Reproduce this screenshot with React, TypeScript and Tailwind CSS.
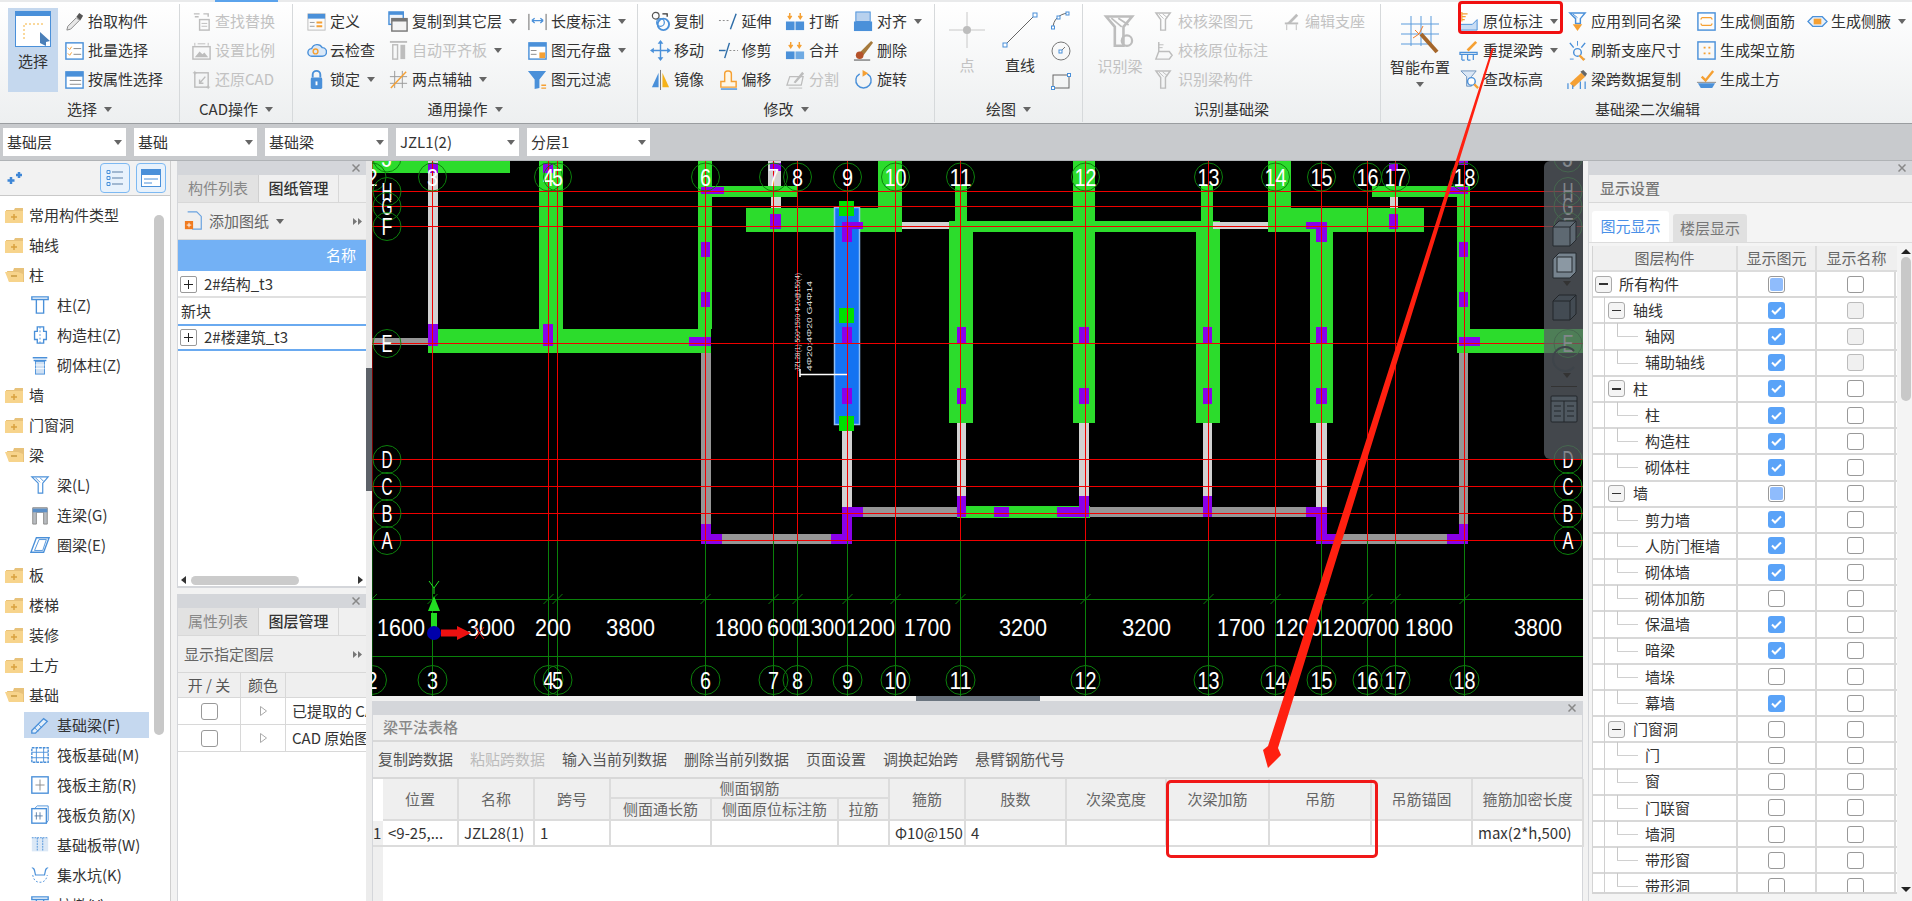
import React from "react";

const B = "#4a90d9";
const O = "#f5a033";
const G = "#bdbdbd";

type R = [number, number, number, number];

const Ico = ({ children, s = 22, className = "" }: { children: React.ReactNode; s?: number; className?: string }) => (
  <svg viewBox="0 0 22 22" width={s} height={s} fill="none" className={"shrink-0 " + className}>
    {children}
  </svg>
);

const Caret = ({ c = "#666" }: { c?: string }) => (
  <svg width="8" height="5" viewBox="0 0 8 5" className="shrink-0 ml-[7px]">
    <path d="M0 0h8L4 5z" fill={c} />
  </svg>
);

// ribbon icons
const icons: Record<string, React.ReactNode> = {
  pick: (<><path d="M3 20l1-4 9-9 3 3-9 9z" fill="#e8e8e8" stroke="#888" /><path d="M13 6l3-4 4 3-3 5z" fill="#555" /></>),
  batch: (<><rect x="2" y="3" width="18" height="17" fill="#fff" stroke={B} strokeWidth="1.5" /><path d="M4 8l2 2 2-3M4 14l2 2 2-3" stroke={O} /><path d="M10 9h8M10 15h8" stroke="#888" /></>),
  attr: (<><rect x="2" y="3" width="18" height="17" fill="#fff" stroke={B} strokeWidth="1.5" /><rect x="2" y="3" width="18" height="5" fill={B} /><path d="M6 12h12M6 16h12" stroke="#888" /></>),
  find: (<><path d="M3 3h6M4 6h4M13 3h5v3" stroke={G} strokeWidth="1.5" /><rect x="9" y="9" width="10" height="11" stroke={G} strokeWidth="1.5" /><path d="M11 13h6M11 16h6" stroke={G} /></>),
  ratio: (<><rect x="2" y="7" width="18" height="13" stroke={G} strokeWidth="1.5" /><path d="M4 18l5-6 3 3 2-2 4 5z" fill={G} /><path d="M4 3v3M18 3v3M7 4h8" stroke={G} /></>),
  restore: (<><rect x="4" y="4" width="14" height="15" stroke={G} strokeWidth="1.5" /><path d="M15 8l-6 7M9 11v4h4" stroke={G} strokeWidth="1.5" /><path d="M2 4h4M4 2v4M16 19h4M18 17v4" stroke={G} /></>),
  define: (<><rect x="2" y="3" width="18" height="17" fill="#fbfbfb" stroke="#bbb" /><rect x="2" y="3" width="18" height="5" fill={B} /><path d="M4 12h5M4 16h5" stroke="#999" /><path d="M11 12h6M11 16h6" stroke={O} strokeWidth="2" /></>),
  cloud: (<><path d="M6 17a4 4 0 010-8 6 6 0 0111-1 4.500 4.500 0 010 9z" fill="#dbe9f8" stroke={B} strokeWidth="1.5" /><circle cx="10" cy="12" r="2.500" stroke={O} strokeWidth="1.500" /></>),
  lock: (<><rect x="5" y="9" width="12" height="12" rx="1.500" fill={B} /><path d="M7 9V6a4 4 0 018 0v3" stroke={B} strokeWidth="2" /><rect x="10" y="13" width="2" height="4" fill="#fff" /></>),
  copyFloor: (<><rect x="1" y="1" width="15" height="13" fill="#eef4fb" stroke={B} strokeWidth="1.500" /><rect x="1" y="1" width="15" height="3" fill={B} /><rect x="4" y="8" width="16" height="13" fill="#f4f4f4" stroke="#777" strokeWidth="1.500" /><rect x="4" y="8" width="16" height="3" fill="#777" /></>),
  autoAlign: (<><path d="M2 2h18" stroke={G} strokeWidth="2" /><rect x="5" y="5" width="5" height="15" stroke={G} strokeWidth="1.500" /><rect x="13" y="5" width="5" height="15" fill={G} /></>),
  twoPoint: (<><path d="M7 2v18M15 2v18M2 8h18M2 15h18" stroke="#999" /><path d="M3 20L19 3" stroke={O} strokeWidth="1.500" /></>),
  len: (<><path d="M2 3v17M20 3v17" stroke="#666" /><path d="M5 10h12M5 10l3-2.500M5 10l3 2.500M17 10l-3-2.500M17 10l-3 2.500" stroke={B} strokeWidth="1.300" /></>),
  save: (<><rect x="2" y="3" width="18" height="17" fill="#fff" stroke={B} strokeWidth="1.500" /><rect x="2" y="3" width="18" height="4" fill={B} /><path d="M4 11h6M4 15h6" stroke="#888" /><rect x="13" y="13" width="6" height="6" fill={O} /></>),
  filter: (<><path d="M1 2h19l-7 9v9l-5 1V11z" fill={B} /><path d="M15 17h5M15 20h5" stroke={O} strokeWidth="1.500" /></>),
  copy: (<><circle cx="6" cy="5" r="3.500" stroke="#555" strokeWidth="1.300" /><circle cx="14" cy="14" r="6" stroke={B} strokeWidth="2" /><circle cx="11" cy="12" r="4" stroke={B} strokeWidth="1.300" /><path d="M13 3h5v3" stroke="#333" strokeWidth="1.300" /></>),
  move: (<><path d="M11 3v16M3 11h16" stroke={B} strokeWidth="1.500" /><path d="M11 0l3 4H8zM11 22l3-4H8zM0 11l4-3v6zM22 11l-4-3v6z" fill={B} /></>),
  mirror: (<><path d="M9 4v15H2z" fill={B} /><path d="M13 4v15h7z" fill="#f5b21a" /><path d="M11 1v21" stroke="#777" /></>),
  extend: (<><path d="M1 10h12" stroke="#888" strokeDasharray="2 2" /><path d="M13 19L19 3" stroke="#2e6da8" strokeWidth="1.500" /></>),
  trim: (<><path d="M1 11h7" stroke="#2e6da8" strokeWidth="1.500" /><path d="M7 19L12 3" stroke="#2e6da8" strokeWidth="1.500" /><path d="M12 11h9" stroke="#888" strokeDasharray="2 2" /></>),
  offset: (<><path d="M3 19v-6h4V5a3 3 0 013-3h1a3 3 0 013 3v8h5v6z" fill="#fff7e6" stroke={O} strokeWidth="1.500" /><path d="M3 21h17" stroke={B} strokeWidth="1.500" /></>),
  brk: (<><rect x="1" y="11" width="9" height="9" fill={B} /><rect x="11" y="11" width="9" height="9" fill={B} /><path d="M5 2v5M3 5l2 3 2-3M16 2v5M14 5l2 3 2-3" stroke={O} strokeWidth="1.500" /></>),
  merge: (<><rect x="1" y="12" width="9" height="8" fill={B} /><rect x="11" y="12" width="9" height="8" fill="#6faae3" /><path d="M6 2v5M4 5l2 3 2-3M15 2v5M13 5l2 3 2-3" stroke={O} strokeWidth="1.500" /></>),
  split: (<><path d="M2 17l3-9h14l-2 9z" stroke={G} strokeWidth="1.300" /><path d="M9 14l9-11 2 2-9 10z" fill={G} /><path d="M4 20h14" stroke={G} /></>),
  align: (<><rect x="3" y="1" width="15" height="10" fill="#b8d1ee" stroke={B} /><rect x="1" y="11" width="19" height="10" fill={B} /></>),
  del: (<><path d="M7 13L19 1l2 2L11 16z" fill="#a67a3c" /><circle cx="7" cy="16" r="4" fill="#b5522a" /><path d="M1 21h17" stroke="#444" /></>),
  rotate: (<><path d="M7 5a8 8 0 108 0" stroke={B} strokeWidth="1.500" /><path d="M10 1v7l6-3.500z" fill={O} /></>),
  ident: (<><path d="M3 2h15L13 8v11H8V8z" stroke={G} strokeWidth="1.500" /><path d="M6 3l6 5M10 3l6 4" stroke={G} /><circle cx="15" cy="16" r="3" stroke={G} strokeWidth="1.300" /></>),
  check: (<><path d="M2 2h15l-5 7v11H7V9z" stroke={G} strokeWidth="1.500" /><path d="M5 3l5 5M9 3l5 4" stroke={G} /></>),
  checkPos: (<><path d="M5 2v10" stroke={G} strokeWidth="1.500" /><path d="M5 5h5M5 8h4" stroke={G} /><path d="M2 20l3-8h11l3 4-3 4z" stroke={G} strokeWidth="1.500" /></>),
  editSup: (<><path d="M4 13h14" stroke={G} strokeWidth="2" /><path d="M6 13l10-10 2 2-8 8z" fill={G} /><path d="M6 14v6M16 14v6" stroke={G} /></>),
  yuan: (<><path d="M3 1v10M3 3h6M3 6h4M3 9h3" stroke={O} strokeWidth="1.300" /><path d="M1 14h13l5-5v11H1z" fill="#c8dcf3" stroke={B} /></>),
  tiqu: (<><path d="M8 10l9-9 2 2-9 9z" fill={O} /><path d="M1 13h18v2H1zM3 15v6M9 15v6M15 15v6M3 21h3M9 21h3" stroke={B} strokeWidth="1.300" /></>),
  chagai: (<><path d="M2 2h16l-5 6v10H8V8z" fill="#dbe7f5" stroke="#6c92bd" /><circle cx="13" cy="13" r="4" fill="#fff" stroke={B} strokeWidth="1.500" /><path d="M16 16l4 4" stroke={O} strokeWidth="2.500" /></>),
  apply: (<><path d="M3 2h16l-5 6v5H9V8z" stroke={B} strokeWidth="1.500" /><path d="M6 3l5 4" stroke={B} /><path d="M6 14h10l-5 7z" fill={O} /></>),
  fresh: (<><path d="M3 3l4 5M19 3l-4 5" stroke={B} strokeWidth="1.500" /><path d="M11 1v5M3 20h4M16 20h3" stroke={B} /><circle cx="11" cy="13" r="4" stroke={B} strokeWidth="1.500" /><path d="M13 16l5 5" stroke={O} strokeWidth="2.500" /></>),
  dataCopy: (<><path d="M3 15L15 4l4 4-12 11z" fill={O} /><path d="M14 3l3-2 4 4-2 3z" fill="#666" /><path d="M1 15v6M6 17v4M14 13v8M19 13v8" stroke={B} strokeWidth="1.300" /></>),
  sideBar: (<><rect x="2" y="2" width="18" height="18" stroke={B} strokeWidth="1.500" /><path d="M6 7h10M6 15h10M5 9l1-2M17 9l-1-2M5 13l1 2M17 13l-1 2" stroke={O} strokeWidth="1.300" /></>),
  frame: (<><rect x="2" y="2" width="18" height="18" stroke={B} strokeWidth="1.500" /><path d="M8 7h2v2H8zM13 7h2v2h-2zM8 13h2v2H8zM13 13h2v2h-2z" fill={O} /></>),
  earth: (<><path d="M6 8l4 4 8-10" stroke={O} strokeWidth="2.500" /><path d="M2 15h18l-3 5H5z" fill={B} /><path d="M1 14h20" stroke="#888" /></>),
  haunch: (<><path d="M1 11l5-5h10l5 5-5 5H6z" stroke={B} strokeWidth="1.300" fill="#e7f1fb" /><rect x="7" y="8" width="8" height="6" fill={O} /></>),
};

const Tool = ({ i, t, arrow, off, w }: { i: string; t: string; arrow?: boolean; off?: boolean; w?: string }) => (
  <div className={"flex items-center h-[29px] whitespace-nowrap " + (off ? "text-[#c2c2c2] " : "text-[#333] ") + (w || "")}>
    <span className="w-[24px] flex">
      <Ico s={21}>{icons[i]}</Ico>
    </span>
    <span>{t}</span>
    {arrow && <Caret />}
  </div>
);

const Group = ({ w, label, arrow = true, last, children, lx = "justify-center" }: { w: string; label: string; arrow?: boolean; last?: boolean; children: React.ReactNode; lx?: string }) => (
  <div className={"flex flex-col h-[118px] mt-[2px] shrink-0 " + w + (last ? "" : " border-r border-[#d6d9db]")}>
    <div className="flex h-[92px] pt-[3px]">{children}</div>
    <div className={"flex items-center h-[26px] text-[#333] " + lx}>
      {label}
      {arrow && <Caret />}
    </div>
  </div>
);

const Ribbon = () => (
  <div className="relative flex h-[124px] shrink-0 bg-linear-to-b from-white to-[#edeff0] border-t-2 border-[#e9eaeb] border-b border-b-[#9a9da0]">
    <div className="absolute left-[215px] -top-[2px] w-[63px] h-[2px] bg-[#5ba3ec]" />
    <Group w="w-[180px]" label="选择">
      <div className="ml-[8px] mr-[6px] w-[50px] h-[84px] mt-[1px] bg-[#c5d8ee] flex flex-col items-center">
        <svg width="36" height="36" viewBox="0 0 36 36" className="mt-[3px]">
          <rect x="0.500" y="0.500" width="35" height="35" fill="#fff" stroke="#4a90d9" />
          <rect x="0" y="0" width="36" height="5" fill="#4a90d9" />
          <path d="M9 28V13h20" stroke="#f5b23a" strokeDasharray="2 2" fill="none" />
          <path d="M25 21l10 9-4 1v4l-6-3z" fill="#4a7fb8" />
        </svg>
        <span className="mt-[3px] text-[#333]">选择</span>
      </div>
      <div>
        <Tool i="pick" t="抬取构件" />
        <Tool i="batch" t="批量选择" />
        <Tool i="attr" t="按属性选择" />
      </div>
    </Group>
    <Group w="w-[113px]" label="CAD操作">
      <div className="pl-[11px]">
        <Tool off i="find" t="查找替换" />
        <Tool off i="ratio" t="设置比例" />
        <Tool off i="restore" t="还原CAD" />
      </div>
    </Group>
    <Group w="w-[345px]" label="通用操作">
      <div className="pl-[13px] w-[95px]">
        <Tool i="define" t="定义" />
        <Tool i="cloud" t="云检查" />
        <Tool i="lock" t="锁定" arrow />
      </div>
      <div className="w-[139px]">
        <Tool i="copyFloor" t="复制到其它层" arrow />
        <Tool off i="autoAlign" t="自动平齐板" arrow />
        <Tool i="twoPoint" t="两点辅轴" arrow />
      </div>
      <div>
        <Tool i="len" t="长度标注" arrow />
        <Tool i="save" t="图元存盘" arrow />
        <Tool i="filter" t="图元过滤" />
      </div>
    </Group>
    <Group w="w-[297px]" label="修改">
      <div className="pl-[12px] w-[79.500px]">
        <Tool i="copy" t="复制" />
        <Tool i="move" t="移动" />
        <Tool i="mirror" t="镜像" />
      </div>
      <div className="w-[67.500px]">
        <Tool i="extend" t="延伸" />
        <Tool i="trim" t="修剪" />
        <Tool i="offset" t="偏移" />
      </div>
      <div className="w-[68px]">
        <Tool i="brk" t="打断" />
        <Tool i="merge" t="合并" />
        <Tool off i="split" t="分割" />
      </div>
      <div>
        <Tool i="align" t="对齐" arrow />
        <Tool i="del" t="删除" />
        <Tool i="rotate" t="旋转" />
      </div>
    </Group>
    <Group w="w-[148px]" label="绘图">
      <div className="ml-[14px] w-[36px] flex flex-col items-center text-[#c2c2c2]">
        <svg width="36" height="36" viewBox="0 0 36 36" className="mt-[5px]">
          <path d="M18 0v36M0 18h36" stroke="#c8c8c8" />
          <circle cx="18" cy="18" r="4" fill="#bdbdbd" />
        </svg>
        <span className="mt-[6px] whitespace-nowrap">点</span>
      </div>
      <div className="ml-[17px] w-[36px] flex flex-col items-center text-[#333]">
        <svg width="36" height="36" viewBox="0 0 36 36" className="mt-[5px]">
          <path d="M3 33L33 3" stroke="#666" />
          <rect x="1" y="31" width="4" height="4" fill="#fff" stroke="#4a90d9" />
          <rect x="31" y="1" width="4" height="4" fill="#fff" stroke="#4a90d9" />
        </svg>
        <span className="mt-[6px] whitespace-nowrap">直线</span>
      </div>
      <div className="ml-[12px] flex flex-col pt-[3px]">
        <Ico><path d="M3 18C3 10 9 4 18 3" stroke="#666" /><rect x="1.500" y="16" width="3" height="3" fill="#fff" stroke={B} /><rect x="16" y="2" width="3" height="3" fill="#fff" stroke={B} /><rect x="7" y="6" width="3" height="3" fill="#fff" stroke={B} /></Ico>
        <Ico className="mt-[8px]"><circle cx="11" cy="11" r="9" stroke="#777" /><path d="M10 12l5-5" stroke="#777" /><rect x="9" y="10" width="3" height="3" fill="#fff" stroke={B} /></Ico>
        <Ico className="mt-[8px]"><rect x="3" y="5" width="16" height="13" stroke="#666" /><rect x="1.500" y="16.500" width="3" height="3" fill="#fff" stroke={B} /><rect x="17.500" y="3.500" width="3" height="3" fill="#fff" stroke={B} /></Ico>
      </div>
    </Group>
    <Group w="w-[298px]" label="识别基础梁" arrow={false} lx="justify-center mt-[2px]">
      <div className="ml-[14px] w-[46px] flex flex-col items-center text-[#c2c2c2]">
        <Ico s={38} className="mt-[6px]">{icons.ident}</Ico>
        <span className="mt-[4px] whitespace-nowrap">识别梁</span>
      </div>
      <div className="ml-[11px] w-[127px]">
        <Tool off i="check" t="校核梁图元" />
        <Tool off i="checkPos" t="校核原位标注" />
        <Tool off i="check" t="识别梁构件" />
      </div>
      <div>
        <Tool off i="editSup" t="编辑支座" />
      </div>
    </Group>
    <Group w="w-[531px]" label="基础梁二次编辑" arrow={false} last lx="justify-start pl-[214px] mt-[2px]">
      <div className="ml-[9px] w-[60px] mr-[9px] flex flex-col items-center text-[#333] whitespace-nowrap">
        <svg width="38" height="38" viewBox="0 0 38 38" className="mt-[9px]">
          <path d="M10 0v30M20 0v30M30 0v30M0 8h38M0 18h38M0 28h30" stroke="#5b9bdc" />
          <path d="M36 36L20 18" stroke="#a5662a" strokeWidth="4" />
          <path d="M14 14l4 4M22 10l-4 8M12 22l6-4" stroke="#f27d2a" />
        </svg>
        <span className="mt-[2px]">智能布置</span>
        <span className="mt-[3px] -ml-[7px]"><Caret /></span>
      </div>
      <div className="w-[108px]">
        <Tool i="yuan" t="原位标注" arrow />
        <Tool i="tiqu" t="重提梁跨" arrow />
        <Tool i="chagai" t="查改标高" />
      </div>
      <div className="w-[129px]">
        <Tool i="apply" t="应用到同名梁" />
        <Tool i="fresh" t="刷新支座尺寸" />
        <Tool i="dataCopy" t="梁跨数据复制" />
      </div>
      <div className="w-[111px]">
        <Tool i="sideBar" t="生成侧面筋" />
        <Tool i="frame" t="生成架立筋" />
        <Tool i="earth" t="生成土方" />
      </div>
      <div>
        <Tool i="haunch" t="生成侧腋" arrow />
      </div>
    </Group>
  </div>
);

const Sel = ({ t }: { t: string }) => (
  <div className="w-[123px] h-[28px] bg-white flex items-center justify-between px-[4px] text-[#333]">
    <span>{t}</span>
    <Caret />
  </div>
);

const Bar = () => (
  <div className="flex items-center gap-[8px] h-[36px] shrink-0 bg-[#c8cacd] pl-[3px]">
    {["基础层", "基础", "基础梁", "JZL1(2)", "分层1"].map((t) => (
      <Sel key={t} t={t} />
    ))}
  </div>
);

// tree on the left
const tree: [string, number, string?][] = [
  ["常用构件类型", 0], ["轴线", 0], ["柱", 1], ["柱(Z)", 2, "col"], ["构造柱(Z)", 2, "gz"], ["砌体柱(Z)", 2, "qt"],
  ["墙", 0], ["门窗洞", 0], ["梁", 1], ["梁(L)", 2, "beam"], ["连梁(G)", 2, "lian"], ["圈梁(E)", 2, "quan"],
  ["板", 0], ["楼梯", 0], ["装修", 0], ["土方", 0], ["基础", 1], ["基础梁(F)", 2, "jcl"], ["筏板基础(M)", 2, "fb"],
  ["筏板主筋(R)", 2, "fz"], ["筏板负筋(X)", 2, "ff"], ["基础板带(W)", 2, "bd"], ["集水坑(K)", 2, "js"], ["柱墩(Y)", 2, "col"],
];

const leaf: Record<string, React.ReactNode> = {
  col: (<><path d="M2 2h18v3H2zM7 5h8v15H7z" stroke={B} strokeWidth="1.500" /></>),
  gz: (<><path d="M8 2h7v5h3v9h-3v4H8v-4H5V7h3z" stroke={B} strokeWidth="1.500" /><path d="M11 2v18" stroke={B} strokeDasharray="2 2" /></>),
  qt: (<><path d="M3 3h16M4 6h14" stroke={B} strokeWidth="1.500" /><rect x="6" y="7" width="10" height="14" fill="#cfe0f3" stroke={B} /><path d="M6 11h10M6 15h10" stroke="#fff" /></>),
  beam: (<><path d="M2 2h18l-6 7v11H9V9z" stroke={B} strokeWidth="1.300" /><path d="M6 3l5 5M11 3l4 4" stroke={B} /></>),
  lian: (<><path d="M3 21V3h16v18h-4V8H7v13z" fill="#b8bcc0" stroke="#888" /><rect x="3" y="4" width="16" height="4" fill="#5b8fc7" /></>),
  quan: (<><path d="M7 3h14l-6 16H1z" stroke={B} strokeWidth="1.500" /><path d="M10 5h8l-4 12H5z" stroke={B} /></>),
  jcl: (<><path d="M2 17L15 4l4 3L6 20H2z" fill="#e2eefa" stroke={B} strokeWidth="1.500" /><path d="M5 14l4 4M9 10l4 4" stroke={B} /></>),
  fb: (<><rect x="2" y="3" width="18" height="16" stroke={B} strokeWidth="1.500" strokeDasharray="3 1" /><path d="M2 8h18M2 14h18M7 3v16M15 3v16" stroke={B} /></>),
  fz: (<><rect x="2" y="2" width="18" height="18" stroke={B} strokeWidth="1.500" /><path d="M11 5v12M6 11h10" stroke="#888" /></>),
  ff: (<><rect x="2" y="4" width="16" height="16" stroke={B} strokeWidth="1.500" /><path d="M5 4l3-3h12v16l-2 3" stroke={B} /><path d="M7 8v8M11 8v8M5 12h9" stroke="#5a7ea6" /></>),
  bd: (<><rect x="2" y="3" width="18" height="15" fill="#dbe8f6" /><path d="M2 3h18M8 3v15M14 3v15" stroke={B} strokeDasharray="2 1" /></>),
  js: (<><path d="M2 3c3 0 3 3 4 8h10c1-5 1-8 4-8" stroke={B} strokeWidth="1.300" /><path d="M3 11c1 6 4 8 8 8s7-2 8-8" stroke={B} strokeDasharray="2 2" /></>),
};

const Folder = ({ open }: { open?: boolean }) =>
  open ? (
    <svg width="20" height="16" viewBox="0 0 20 16" className="shrink-0">
      <path d="M2 4h6l1-3h10v14H4z" fill="#e8c27a" />
      <path d="M0 5h13l5 2v8H4z" fill="#f7d48c" />
      <path d="M6 9h6" stroke="#c89a3f" strokeWidth="1.500" />
    </svg>
  ) : (
    <svg width="18" height="16" viewBox="0 0 18 16" className="shrink-0">
      <path d="M1 3h8l1-2h8v14H1z" fill="#e8c27a" />
      <rect x="0" y="4" width="18" height="12" fill="#f7d48c" />
      <path d="M6 10h6M9 7v6" stroke="#d9a13f" strokeWidth="1.500" />
    </svg>
  );

const LeftTree = () => (
  <div className="w-[171px] shrink-0 flex flex-col bg-white border-r border-[#cfcfcf] overflow-hidden">
    <div className="h-[35px] shrink-0 bg-[#f2f2f2] border-b border-[#c9c9c9] flex items-center">
      <svg width="16" height="14" viewBox="0 0 16 14" className="ml-[7px]">
        <path d="M4 6v7M0.500 9.500h7M12 1v6M9 4h6" stroke="#3e86d6" strokeWidth="2.500" />
      </svg>
      <div className="ml-[77px] w-[30px] h-[30px] rounded-[4px] border border-[#7db9f2] bg-[#e8f2fc] flex items-center justify-center">
        <svg width="18" height="18" viewBox="0 0 18 18">
          <path d="M6 3h11M6 9h11M6 15h11" stroke="#5a7ea6" />
          <path d="M1 1.500h3v3H1zM1 7.500h3v3H1zM1 13.500h3v3H1z" stroke="#4a90d9" fill="none" />
        </svg>
      </div>
      <div className="ml-[6px] w-[30px] h-[30px] rounded-[4px] border border-[#7db9f2] bg-[#e8f2fc] flex items-center justify-center">
        <svg width="20" height="18" viewBox="0 0 20 18">
          <rect x="0.500" y="0.500" width="19" height="17" fill="#fff" stroke="#4a90d9" />
          <rect x="0" y="0" width="20" height="6" fill="#4a90d9" />
          <path d="M3 10h14M3 14h8" stroke="#4a90d9" />
        </svg>
      </div>
    </div>
    <div className="relative flex-1 pt-[4px]">
      {tree.map(([t, k, ic], i) => (
        <div key={i} className={"flex items-center h-[30px] text-[#333] whitespace-nowrap " + (k === 2 ? "pl-[30px]" : "pl-[5px]")}>
          {k === 2 ? (
            <div className={"flex items-center h-[26px] -ml-[6px] pl-[6px] w-[125px] " + (t === "基础梁(F)" ? "bg-[#c5d8ef]" : "")}>
              <Ico s={20}>{leaf[ic!]}</Ico>
              <span className="ml-[7px]">{t}</span>
            </div>
          ) : (
            <>
              <span className="w-[24px] flex">
                <Folder open={k === 1} />
              </span>
              <span>{t}</span>
            </>
          )}
        </div>
      ))}
      <div className="absolute left-[154px] top-[19px] w-[10px] h-[520px] rounded-full bg-[#c8c8c8]" />
    </div>
  </div>
);

const Close = () => (
  <div className="h-[14px] shrink-0 bg-[#d4d6da] flex items-center justify-end pr-[6px]">
    <svg width="8" height="8" viewBox="0 0 8 8">
      <path d="M0.500 0.500l7 7M7.500 0.500l-7 7" stroke="#888" strokeWidth="1.500" />
    </svg>
  </div>
);

const Forward = () => (
  <svg width="9" height="7" viewBox="0 0 9 7" className="shrink-0">
    <path d="M0 0l4 3.500L0 7zM5 0l4 3.500L5 7z" fill="#777" />
  </svg>
);

const Tabs = ({ a, b }: { a: string; b: string }) => (
  <div className="flex h-[28px] shrink-0 bg-[#f0f0f0] border-b border-[#d8d8d8]">
    <div className="w-[81px] bg-[#e2e2e2] text-[#888] flex items-center justify-center border-r border-[#d0d0d0]">{a}</div>
    <div className="w-[80px] text-[#333] font-medium flex items-center justify-center border-r border-[#d8d8d8]">{b}</div>
  </div>
);

const Plus = () => (
  <span className="w-[17px] h-[17px] border border-[#9a9a9a] rounded-[2px] flex items-center justify-center ml-[2px] shrink-0 bg-white">
    <svg width="9" height="9" viewBox="0 0 9 9">
      <path d="M4.500 0v9M0 4.500h9" stroke="#222" />
    </svg>
  </span>
);

const Middle = () => (
  <div className="w-[189px] shrink-0 ml-[6px] flex flex-col text-[#333] gap-[6px]">
    <div className="h-[427px] flex flex-col border-b-2 border-l border-[#d4d6da] bg-white">
      <Close />
      <Tabs a="构件列表" b="图纸管理" />
      <div className="h-[37px] shrink-0 bg-[#efefef] border-b border-[#d8d8d8] flex items-center pl-[6px] pr-[4px] text-[#666]">
        <Ico s={20}><path d="M4 1h10l5 5v14H9" stroke="#6aa3e0" strokeWidth="1.300" /><rect x="1" y="11" width="9" height="9" fill="#f07a1f" /><path d="M5.500 13v5M3 15.500h5" stroke="#fff" /></Ico>
        <span className="ml-[5px]">添加图纸</span>
        <Caret />
        <span className="ml-auto"><Forward /></span>
      </div>
      <div className="h-[31px] shrink-0 bg-[#73b1f5] text-white flex items-center justify-end pr-[10px]">名称</div>
      <div className="h-[26px] mt-[1px] flex items-center border-b-2 border-[#e0e0e0]">
        <Plus />
        <span className="ml-[7px]">2#结构_t3</span>
      </div>
      <div className="h-[26px] flex items-center pl-[3px]">新块</div>
      <div className="h-[27px] flex items-center border-y-2 border-[#6aaaf0]">
        <Plus />
        <span className="ml-[7px]">2#楼建筑_t3</span>
      </div>
      <div className="flex-1" />
      <div className="h-[12px] flex items-center px-[3px] shrink-0">
        <svg width="5" height="8" viewBox="0 0 5 8"><path d="M5 0v8L0 4z" fill="#333" /></svg>
        <div className="ml-[5px] w-[108px] h-[9px] rounded-full bg-[#cbcbcb]" />
        <svg width="5" height="8" viewBox="0 0 5 8" className="ml-auto"><path d="M0 0v8l5-4z" fill="#333" /></svg>
      </div>
    </div>
    <div className="flex-1 flex flex-col border-l border-[#d4d6da] bg-white overflow-hidden">
      <Close />
      <Tabs a="属性列表" b="图层管理" />
      <div className="h-[37px] shrink-0 bg-[#efefef] border-b border-[#d8d8d8] flex items-center pl-[6px] pr-[4px] text-[#666] justify-between">
        显示指定图层
        <Forward />
      </div>
      <div className="grid grid-cols-[63px_45px_81px] whitespace-nowrap">
        <div className="h-[25px] bg-[#efefef] border-r border-b border-[#d8d8d8] flex items-center justify-center text-[#555]">开 / 关</div>
        <div className="h-[25px] bg-[#efefef] border-r border-b border-[#d8d8d8] flex items-center justify-center text-[#555]">颜色</div>
        <div className="h-[25px] bg-[#efefef] border-b border-[#d8d8d8]" />
        {["已提取的 CAD 图层", "CAD 原始图层"].map((t) => (
          <React.Fragment key={t}>
            <div className="h-[27px] border-r border-b border-[#d8d8d8] flex items-center justify-center">
              <span className="w-[17px] h-[17px] rounded-[3px] border border-[#999]" />
            </div>
            <div className="h-[27px] border-r border-b border-[#d8d8d8] flex items-center justify-center">
              <svg width="7" height="10" viewBox="0 0 7 10"><path d="M0.500 0.500v9l6-4.500z" fill="#fff" stroke="#aaa" /></svg>
            </div>
            <div className="h-[27px] border-b border-[#d8d8d8] flex items-center pl-[6px] overflow-hidden">{t}</div>
          </React.Fragment>
        ))}
      </div>
    </div>
  </div>
);

// CAD drawing, coordinates are page pixels
const GREEN: R[] = [
  [372, 160, 510, 172], [539, 160, 563, 328], [428, 328, 711, 352], [698, 160, 712, 328], [701, 185, 797, 196],
  [746, 207, 902, 231], [878, 160, 902, 207], [955, 184, 967, 220], [949, 220, 1220, 231], [949, 231, 973, 422],
  [1073, 160, 1095, 422], [1201, 184, 1213, 220], [1196, 231, 1220, 422], [1268, 160, 1291, 207], [1268, 207, 1424, 231],
  [1310, 231, 1333, 422], [1372, 185, 1470, 196], [1457, 196, 1470, 328], [1457, 328, 1583, 352], [957, 505, 1090, 517],
];
const LIGHT: R[] = [
  [428, 160, 438, 323], [768, 160, 781, 185], [771, 196, 781, 207], [842, 430, 852, 507], [902, 221, 949, 228],
  [1213, 221, 1268, 228], [957, 422, 966, 495], [1079, 422, 1089, 495], [1203, 422, 1212, 495], [1316, 422, 1327, 506],
  [1390, 196, 1398, 207],
];
const DARK: R[] = [
  [372, 337, 428, 344], [701, 352, 711, 523], [722, 533, 831, 543], [863, 506, 957, 516], [1090, 506, 1306, 516],
  [1340, 533, 1447, 543], [1459, 352, 1468, 523],
];
const PURPLE: R[] = [
  [428, 162, 438, 172], [428, 323, 438, 345], [543, 162, 553, 172], [543, 323, 553, 345], [701, 186, 724, 193],
  [689, 336, 711, 345], [701, 241, 710, 256], [701, 291, 710, 306], [701, 523, 711, 543], [701, 533, 722, 543],
  [831, 533, 852, 543], [842, 507, 852, 543], [842, 506, 863, 516], [770, 162, 781, 170], [770, 213, 781, 228],
  [957, 326, 966, 342], [957, 387, 966, 403], [1079, 326, 1089, 342], [1079, 387, 1089, 403], [1203, 326, 1212, 342],
  [1203, 387, 1212, 403], [1316, 326, 1327, 342], [1316, 387, 1327, 403], [957, 495, 966, 516], [1079, 495, 1089, 516],
  [1057, 506, 1089, 516], [994, 506, 1009, 516], [1203, 495, 1212, 516], [1306, 221, 1327, 228], [1316, 221, 1327, 241],
  [1306, 506, 1327, 516], [1316, 506, 1327, 543], [1316, 533, 1340, 543], [1447, 533, 1468, 543], [1459, 523, 1468, 543],
  [1447, 186, 1468, 193], [1459, 241, 1468, 256], [1459, 291, 1468, 306], [1459, 160, 1468, 164], [1459, 336, 1480, 345],
  [1389, 162, 1398, 170], [1389, 213, 1398, 228],
];
const BEAM_PURPLE: R[] = [[842, 221, 852, 241], [842, 221, 863, 228], [842, 326, 852, 342], [842, 387, 852, 403]];
const NODES: R[] = [[839, 200, 854, 215], [839, 307, 854, 322], [839, 415, 854, 430]];

const COLS: [string, number][] = [
  ["2", 372], ["3", 432.5], ["4", 548.5], ["5", 557.5], ["6", 705.5], ["7", 773.5], ["8", 797.5], ["9", 847.5], ["10", 895.5], ["11", 960.5],
  ["12", 1085.5], ["13", 1208.5], ["14", 1275.5], ["15", 1321.5], ["16", 1367.5], ["17", 1395.5], ["18", 1464.5],
];
const ROWS: [string, number][] = [["H", 190.5], ["G", 205.5], ["F", 225.5], ["E", 342.5], ["D", 458.5], ["C", 485.5], ["B", 512.5], ["A", 539.5]];
const DIMS: [string, number, number][] = [
  ["1600", 377, 48], ["3000", 467, 48], ["200", 535, 36], ["3800", 606, 49], ["1800", 715, 48], ["600", 767, 36], ["1300", 799, 47],
  ["1200", 846, 49], ["1700", 904, 47], ["3200", 999, 48], ["3200", 1122, 49], ["1700", 1217, 48], ["1200", 1275, 47], ["1200", 1321, 48],
  ["700", 1365, 34], ["1800", 1405, 48], ["3800", 1514, 48],
];

const Rects = ({ d, c }: { d: R[]; c: string }) => (
  <>
    {d.map(([x1, y1, x2, y2], i) => (
      <rect key={i} x={x1} y={y1} width={x2 - x1} height={y2 - y1} fill={c} />
    ))}
  </>
);

const Axis = ({ t, x, y, r = 14 }: { t: string; x: number; y: number; r?: number }) => (
  <g>
    <circle cx={x} cy={y} r={r} stroke="#0c800c" fill="none" />
    <text x={x} y={y + 8.500} fill="#fff" fontSize="24" textAnchor="middle" textLength={t.length * 11} lengthAdjust="spacingAndGlyphs" fontFamily="Liberation Sans">
      {t}
    </text>
  </g>
);

const Canvas = () => (
  <div className="relative h-[535px] shrink-0 bg-black overflow-hidden">
    <svg viewBox="372 160 1211 535" width="1211" height="535" className="block">
      <Rects d={GREEN} c="#2cdc2c" />
      <Rects d={LIGHT} c="#d2d2d2" />
      <Rects d={DARK} c="#969696" />
      <Rects d={PURPLE} c="#8a00ea" />
      <rect x="834.500" y="206.500" width="25" height="217" fill="#1473f2" stroke="#8fbdf2" strokeWidth="1.500" />
      <Rects d={BEAM_PURPLE} c="#8a00ea" />
      <Rects d={NODES} c="#00e000" />
      {COLS.map(([t, x]) => (
        <g key={t}>
          <path d={`M${x} 160V539`} stroke="#f00000" />
          <path d={`M${x} 539V695`} stroke="#0a800a" />
          <path d={`M${x - 5} 603l10-10`} stroke="#0a800a" />
        </g>
      ))}
      {ROWS.map(([t, y]) => (
        <path key={t} d={`M372 ${y}H1583`} stroke="#f00000" />
      ))}
      <path d="M372 598.500H1583M372 655.500H1583" stroke="#0a800a" />
      {COLS.map(([t, x]) => (
        <React.Fragment key={t}>
          <Axis t={t} x={x} y={176} />
          <Axis t={t} x={x} y={679} r={14.500} />
        </React.Fragment>
      ))}
      {ROWS.map(([t, y]) => (
        <React.Fragment key={t}>
          <Axis t={t} x={387} y={y} />
          <Axis t={t} x={1568} y={y} />
        </React.Fragment>
      ))}
      <Axis t="J" x={387} y={157} />
      <Axis t="J" x={1568} y={157} />
      {DIMS.map(([t, x, w], i) => (
        <text key={i} x={x} y={635} fill="#fff" fontSize="24" textLength={w} lengthAdjust="spacingAndGlyphs" fontFamily="Liberation Sans">
          {t}
        </text>
      ))}
      <path d="M800 373.500H847M800 368v8" stroke="#fff" strokeWidth="1.500" />
      <text transform="translate(800 370) rotate(-90)" fill="#ddd" fontSize="7" textLength="98" lengthAdjust="spacingAndGlyphs" fontFamily="Liberation Sans">
        JZL28(1) 500*1500 Φ10@150(4)
      </text>
      <text transform="translate(812 370) rotate(-90)" fill="#ddd" fontSize="7" textLength="90" lengthAdjust="spacingAndGlyphs" fontFamily="Liberation Sans">
        4Φ20;4Φ20 G4Φ14
      </text>
      <path d="M434 632V612" stroke="#22dd22" strokeWidth="6" />
      <path d="M434 595l6 15h-12z" fill="#22dd22" />
      <path d="M429 580l5 7 5-7M434 587v6" stroke="#22dd22" fill="none" />
      <path d="M441 632h18" stroke="#ee1111" strokeWidth="7" />
      <path d="M471 632l-14-7v14z" fill="#ee1111" />
      <path d="M475 626l9 12M484 626l-9 12" stroke="#ee1111" />
      <circle cx="434" cy="632" r="7" fill="#0000aa" />
    </svg>
    {/* floating view toolbar */}
    <div className="absolute right-0 top-0 w-[39px] h-[298px] rounded-l-md bg-[#5a5f65]/75 flex flex-col items-center">
      <svg width="28" height="30" viewBox="0 0 28 30" className="mt-[58px]"><path d="M3 8l6-6h17v19l-6 6H3z" fill="#5e6972" stroke="#252a2f" /><path d="M3 8h17v19M20 8l6-6" fill="none" stroke="#252a2f" /></svg>
      <svg width="28" height="30" viewBox="0 0 28 30" className="mt-[2px]"><path d="M3 8l6-6h17v19l-6 6H3z" fill="#76838e" stroke="#252a2f" /><rect x="7" y="6" width="15" height="15" fill="#8b98a3" stroke="#252a2f" /></svg>
      <Caret c="#333" />
      <svg width="28" height="30" viewBox="0 0 28 30" className="mt-[7px]"><path d="M3 8l6-6h17v19l-6 6H3z" fill="#434b53" stroke="#22262a" /><path d="M3 8h17v19M20 8l6-6" fill="none" stroke="#22262a" /></svg>
      <svg width="28" height="28" viewBox="0 0 28 28" className="mt-[22px]"><path d="M24 6a12 12 0 100 16" stroke="#3e444a" strokeWidth="2" fill="none" /></svg>
      <Caret c="#333" />
      <div className="w-[26px] h-px bg-[#333] mt-[8px]" />
      <svg width="28" height="28" viewBox="0 0 28 28" className="mt-[8px]">
        <rect x="1" y="1" width="26" height="26" rx="1" fill="#4f5860" stroke="#22262a" />
        <path d="M1 6h26M14 6v21M4 11h7M17 11h7M4 16h7M17 16h7M4 21h7M17 21h7" stroke="#22262a" />
      </svg>
    </div>
  </div>
);

const headers: [string, string][] = [
  ["位置", "row-span-2"], ["名称", "row-span-2"], ["跨号", "row-span-2"], ["侧面钢筋", "col-span-3"], ["箍筋", "row-span-2"],
  ["肢数", "row-span-2"], ["次梁宽度", "row-span-2"], ["次梁加筋", "row-span-2"], ["吊筋", "row-span-2"], ["吊筋锚固", "row-span-2"], ["箍筋加密长度", "row-span-2"],
];
const cell = "border-r-2 border-[#dcdcdc] flex items-center overflow-hidden whitespace-nowrap";

const BeamTable = () => (
  <div className="flex-1 flex flex-col bg-white border-x border-[#d4d6da]">
    <Close />
    <div className="h-[27px] shrink-0 bg-[#efefef] border-b-2 border-[#d8d8d8] flex items-center pl-[10px] text-[#888] font-medium">梁平法表格</div>
    <div className="h-[37px] shrink-0 bg-[#efefef] border-b-2 border-[#d8d8d8] flex items-center gap-[17px] pl-[5px] text-[#555]">
      <span>复制跨数据</span>
      <span className="text-[#bbb]">粘贴跨数据</span>
      <span>输入当前列数据</span>
      <span>删除当前列数据</span>
      <span>页面设置</span>
      <span>调换起始跨</span>
      <span>悬臂钢筋代号</span>
    </div>
    <div className="grid grid-cols-[10px_76px_76px_76px_101px_127px_51px_76px_101px_100px_103px_102px_101px_111px] grid-rows-[20px_22px_26px]">
      <div className="row-span-2 bg-white" />
      {headers.map(([t, c]) => (
        <div key={t} className={"bg-[#efefef] border-b-2 text-[#666] justify-center " + cell + " " + c}>
          {t}
        </div>
      ))}
      {["侧面通长筋", "侧面原位标注筋", "拉筋"].map((t) => (
        <div key={t} className={"bg-[#efefef] border-b-2 text-[#666] justify-center " + cell}>
          {t}
        </div>
      ))}
      <div className="bg-[#efefef] border-b-2 border-[#dcdcdc] flex items-center text-[#333]">1</div>
      {["<9-25,...", "JZL28(1)", "1", "", "", "", "Φ10@150", "4", "", "", "", "", "max(2*h,500)"].map((t, i) => (
        <div key={i} className={"border-b-2 pl-[5px] text-[#333] " + cell}>
          {t}
        </div>
      ))}
    </div>
    <div className="flex-1 w-[10px] bg-[#efefef]" />
  </div>
);

// display settings on the right
type Row = [string, number, number, number];
// name, level (0-2), element state (0 none, 1 check, 2 half), name state (0 none, 3 disabled)
const rows: Row[] = [
  ["所有构件", 0, 2, 0], ["轴线", 1, 1, 3], ["轴网", 2, 1, 3], ["辅助轴线", 2, 1, 3], ["柱", 1, 1, 0], ["柱", 2, 1, 0], ["构造柱", 2, 1, 0], ["砌体柱", 2, 1, 0],
  ["墙", 1, 2, 0], ["剪力墙", 2, 1, 0], ["人防门框墙", 2, 1, 0], ["砌体墙", 2, 1, 0], ["砌体加筋", 2, 0, 0], ["保温墙", 2, 1, 0], ["暗梁", 2, 1, 0], ["墙垛", 2, 0, 0], ["幕墙", 2, 1, 0],
  ["门窗洞", 1, 0, 0], ["门", 2, 0, 0], ["窗", 2, 0, 0], ["门联窗", 2, 0, 0], ["墙洞", 2, 0, 0], ["带形窗", 2, 0, 0], ["带形洞", 2, 0, 0],
];

const Box = ({ s }: { s: number }) => {
  if (s === 1)
    return (
      <span className="w-[17px] h-[17px] rounded-[3px] bg-[#5aa3f8] flex items-center justify-center">
        <svg width="11" height="9" viewBox="0 0 11 9"><path d="M1 4.500l3 3 6-6" stroke="#fff" strokeWidth="2" fill="none" /></svg>
      </span>
    );
  if (s === 2)
    return (
      <span className="w-[17px] h-[17px] rounded-[3px] border border-[#999] flex items-center justify-center">
        <span className="w-[13px] h-[13px] rounded-[2px] bg-[#8fbcfc]" />
      </span>
    );
  if (s === 3) return <span className="w-[17px] h-[17px] rounded-[3px] border border-[#bbb] bg-[#f0f0f0]" />;
  return <span className="w-[17px] h-[17px] rounded-[3px] border border-[#999] bg-white" />;
};

const Minus = () => (
  <span className="relative w-[17px] h-[17px] rounded-[3px] border border-[#aaa] bg-[#f4f4f4] flex items-center justify-center shrink-0">
    <span className="w-[9px] h-[1.500px] bg-[#333]" />
  </span>
);

const NameCell = ({ r }: { r: Row }) => (
  <div className="relative flex items-center h-full border-r-2 border-[#d8d8d8] text-[#333] whitespace-nowrap">
    {r[1] > 0 && <span className="absolute left-[11px] -top-px -bottom-px w-px bg-[#d0d0d0]" />}
    {r[1] === 2 && (
      <>
        <span className="absolute left-[24px] -top-px bottom-[12px] w-px bg-[#c8c8c8]" />
        <span className="absolute left-[24px] top-[12px] w-[21px] h-px bg-[#d0d0d0]" />
      </>
    )}
    {r[1] === 0 && (
      <span className="flex items-center pl-[2px]">
        <Minus />
        <span className="ml-[7px]">{r[0]}</span>
      </span>
    )}
    {r[1] === 1 && (
      <span className="flex items-center pl-[15px]">
        <Minus />
        <span className="ml-[8px]">{r[0]}</span>
      </span>
    )}
    {r[1] === 2 && <span className="pl-[52px]">{r[0]}</span>}
  </div>
);

const RightPanel = () => (
  <div className="flex-1 ml-[5px] flex flex-col bg-[#f4f4f4] border-l border-[#d4d6da] overflow-hidden">
    <Close />
    <div className="h-[28px] shrink-0 bg-[#efefef] border-b border-[#d8d8d8] flex items-center pl-[11px] text-[#777] font-medium">显示设置</div>
    <div className="h-[40px] shrink-0 flex items-end pl-[3px] gap-[4px] bg-[#f4f4f4] border-b border-[#dcdcdc]">
      <div className="w-[77px] h-[31px] bg-white rounded-t-[3px] text-[#4a90e8] flex items-center justify-center">图元显示</div>
      <div className="w-[74px] h-[28px] bg-[#e0e0e0] rounded-t-[3px] text-[#777] flex items-center justify-center">楼层显示</div>
    </div>
    <div className="flex-1 flex pl-[3px] pt-[3px] pb-[7px] min-h-0">
      <div className="w-[305px] overflow-hidden bg-white border-l border-b-2 border-[#d4d4d4] flex flex-col">
        <div className="grid grid-cols-[145px_79px_79px] h-[26px] shrink-0 bg-[#efefef] text-[#666] border-b-2 border-[#dcdcdc]">
          <div className="flex items-center justify-center border-r-2 border-[#dcdcdc]">图层构件</div>
          <div className="flex items-center justify-center border-r-2 border-[#dcdcdc]">显示图元</div>
          <div className="flex items-center justify-center">显示名称</div>
        </div>
        {rows.map((r, i) => (
          <div key={i} className="grid grid-cols-[145px_79px_79px] h-[26.200px] shrink-0 border-b-2 border-[#d8d8d8]">
            <NameCell r={r} />
            <div className="flex items-center justify-center border-r-2 border-[#d8d8d8]">
              <Box s={r[2]} />
            </div>
            <div className="flex items-center justify-center border-r-2 border-[#d8d8d8]">
              <Box s={r[3]} />
            </div>
          </div>
        ))}
      </div>
      <div className="w-[15px] flex flex-col items-center pl-[3px]">
        <svg width="10" height="5" viewBox="0 0 10 5" className="mt-[3px]"><path d="M5 0l5 5H0z" fill="#222" /></svg>
        <div className="w-[10px] h-[144px] rounded-full bg-[#c8c8c8] mt-[3px]" />
        <svg width="10" height="5" viewBox="0 0 10 5" className="mt-auto mb-[2px]"><path d="M0 0h10L5 5z" fill="#222" /></svg>
      </div>
    </div>
  </div>
);

export default function App() {
  return (
    <div className="relative w-[1912px] h-[901px] overflow-hidden flex flex-col bg-[#f2f2f2] text-[15px] font-['Noto_Sans_CJK_SC','Liberation_Sans',sans-serif]">
      <Ribbon />
      <Bar />
      <div className="flex flex-1 min-h-0 border-t border-[#b0b3b6]">
        <LeftTree />
        <Middle />
        <div className="w-[6px] shrink-0 flex flex-col bg-[#ececec]">
          <div className="h-[207px] bg-[#e6e6e6]" />
          <div className="h-[123px] bg-[#5d6269]" />
        </div>
        <div className="w-[1211px] shrink-0 flex flex-col">
          <Canvas />
          <div className="relative h-[5px] shrink-0 bg-[#f0f0f0]">
            <div className="absolute left-[544px] w-[124px] h-[5px] bg-[#6b7580]" />
          </div>
          <BeamTable />
        </div>
        <RightPanel />
      </div>

      {/* annotations drawn over the screenshot */}
      <div className="absolute left-[1458px] top-[1px] w-[105px] h-[33px] border-[3px] border-[#f01010] rounded-[4px]" />
      <div className="absolute left-[1166px] top-[780px] w-[212px] h-[78px] border-[3px] border-[#f01818] rounded-[5px]" />
      <svg viewBox="0 0 1912 901" width="1912" height="901" className="absolute left-0 top-0 pointer-events-none">
        <polygon points="1492,48 1494,48 1278,748 1281,755 1268,768 1263,750 1268,746" fill="#ff2010" />
      </svg>
    </div>
  );
}
